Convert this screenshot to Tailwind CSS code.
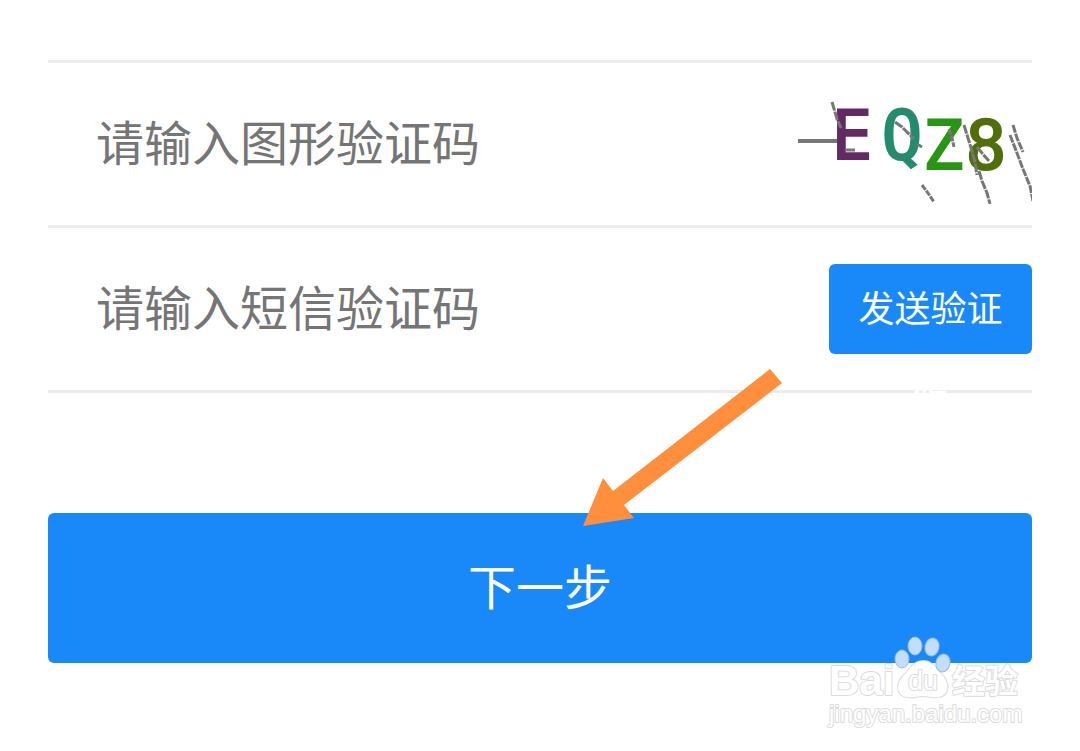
<!DOCTYPE html>
<html lang="zh-CN">
<head>
    <meta charset="UTF-8">
    <meta name="viewport" content="width=device-width, initial-scale=1.0">
    <title>验证</title>
    <script src="https://cdn.jsdelivr.net/npm/@tailwindcss/browser@4"></script>
</head>
<body class="bg-white min-h-screen overflow-x-hidden font-['Noto_Sans_CJK_SC',sans-serif]">
<main class="relative min-h-screen px-12">
    <form class="w-full">
        <div class="h-[63px] border-b-3 border-[#ececec]"></div>

        <!-- Image captcha -->
        <div class="flex items-center h-[165px] border-b-3 border-[#ececec]">
            <input type="text" name="captcha" placeholder="请输入图形验证码" aria-label="请输入图形验证码"
                   class="flex-1 min-w-0 h-24 pl-12 pb-2 text-[48px] text-gray-800 placeholder:text-[#757575] focus:outline-none">
            <svg class="shrink-0 w-60 h-[120px] font-['DejaVu_Sans_Mono',monospace]" viewBox="0 0 240 120">
                <g font-size="68" text-anchor="middle" stroke-width="2">
                    <text x="60" y="75" fill="#642864" stroke="#642864">E</text>
                    <text x="110" y="75" fill="#248c6c" stroke="#248c6c">Q</text>
                    <text x="151" y="85" fill="#289614" stroke="#289614">Z</text>
                    <text x="194" y="85" fill="#506e0a" stroke="#506e0a">8</text>
                </g>
                <g fill="none" stroke="#777" stroke-width="3">
                    <path stroke-width="4" d="M6 57h39"/>
                    <path stroke-dasharray="9 1" d="M40 18l3 10 2 7 4 9M54 66h9M103 38l7 5 5 5 7 7M125 60l5 3"/>
                    <path stroke-dasharray="6 1" d="M130 101l6 8 6 9M157 45l3 9 2 9"/>
                    <path stroke-dasharray="9 1" d="M172 41l4 13 4 13 3 12 2 12M185 63l5 6 7 8M187 87l3 10 5 12 3 11"/>
                    <path stroke-dasharray="8 1" d="M218 51l7 18 6 16 7 17 3 15M221 41l4 13 6 14"/>
                </g>
            </svg>
        </div>

        <!-- SMS code -->
        <div class="flex items-center h-[165px] border-b-3 border-[#ececec]">
            <input type="text" name="sms" placeholder="请输入短信验证码" aria-label="请输入短信验证码"
                   class="flex-1 min-w-0 h-24 pl-12 pb-2 text-[48px] text-gray-800 placeholder:text-[#757575] focus:outline-none">
            <button type="button"
                    class="flex items-start justify-center shrink-0 w-[203px] h-[90px] px-7 rounded-md bg-[#1989fa] text-4xl/[84px] text-white break-all">
                发送验证码
            </button>
        </div>

        <div class="relative mt-30">
            <button type="submit" class="block w-full h-[150px] pb-2 rounded-md bg-[#1989fa] text-[48px] text-white">
                下一步
            </button>
            <svg class="absolute left-1/2 ml-10 -top-36 w-51 h-40 pointer-events-none" viewBox="0 0 204 160">
                <path fill="#ff8f3c" d="M190 0L202 14 44 136 54 149 3 157 23 109 33 122z"/>
            </svg>
        </div>
    </form>

    <!-- Watermark -->
    <svg class="absolute right-12 bottom-5 w-[212px] h-24 pointer-events-none overflow-visible" viewBox="0 0 212 96">
        <g fill="#fff" stroke="#dcdcdc" stroke-width="2" paint-order="stroke" stroke-linejoin="round">
            <text x="9" y="60" font-size="42" class="font-['Liberation_Sans',sans-serif] font-bold">Bai</text>
            <path d="M103 26c9 0 13 7 18 13 9 8 9 21-2 23-6 1-10-1-16-1s-10 2-16 1c-12-2-11-15-2-23 6-6 9-13 18-13z"/>
            <text x="88" y="55" font-size="27" class="font-['Liberation_Sans',sans-serif]">du</text>
            <text x="132" y="58" font-size="33" class="font-['Noto_Sans_CJK_SC',sans-serif] font-bold">经验</text>
            <text x="9" y="87" font-size="24" class="font-['Liberation_Sans',sans-serif]">jingyan.baidu.com</text>
        </g>
        <g fill="#c3defd" stroke="#9fb9d8" stroke-width="1">
            <ellipse cx="82" cy="24" rx="7" ry="9"/>
            <ellipse cx="95" cy="11" rx="7" ry="9"/>
            <ellipse cx="112" cy="12" rx="7" ry="9" transform="rotate(12 112 12)"/>
            <ellipse cx="123" cy="28" rx="7" ry="9" transform="rotate(12 123 28)"/>
        </g>
    </svg>
</main>
</body>
</html>
